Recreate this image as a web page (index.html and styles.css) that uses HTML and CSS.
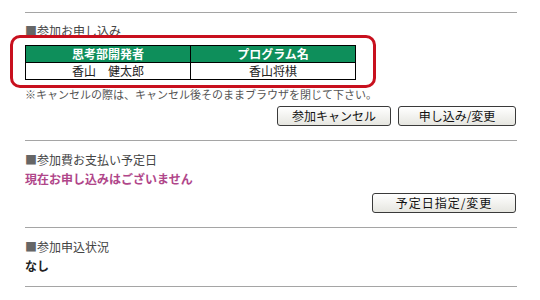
FILE: index.html
```html
<!DOCTYPE html>
<html lang="ja">
<head>
    <meta charset="UTF-8">
    <title>参加状況</title>
    <link rel="stylesheet" href="styles.css">
</head>
<body>
    <div class="page">
        <div class="rule"></div>

        <div class="section first">
            <div class="heading"><span class="mark">■</span>参加お申し込み</div>
            <div class="entry-wrap">
                <table class="entry-table">
                    <thead>
                        <tr>
                            <th class="col-dev">思考部開発者</th>
                            <th>プログラム名</th>
                        </tr>
                    </thead>
                    <tbody>
                        <tr>
                            <td>香山　健太郎</td>
                            <td>香山将棋</td>
                        </tr>
                    </tbody>
                </table>
                <div class="highlight"></div>
            </div>
            <div class="note">※キャンセルの際は、キャンセル後そのままブラウザを閉じて下さい。</div>
            <div class="actions">
                <button class="btn btn-cancel">参加キャンセル</button>
                <button class="btn btn-apply">申し込み/変更</button>
            </div>
        </div>

        <div class="rule"></div>

        <div class="section">
            <div class="heading"><span class="mark">■</span>参加費お支払い予定日</div>
            <div class="status-pink">現在お申し込みはございません</div>
            <div class="actions">
                <button class="btn btn-date">予定日指定/変更</button>
            </div>
        </div>

        <div class="rule"></div>

        <div class="section last">
            <div class="heading"><span class="mark">■</span>参加申込状況</div>
            <div class="status">なし</div>
        </div>

        <div class="rule"></div>

        <div class="section next">
            <div class="heading faint">■過去の大会参加履歴</div>
        </div>
    </div>
</body>
</html>
```

FILE: styles.css
```css
body {
    margin: 0;
    padding: 0;
    background-color: #fff;
    font-family: "Noto Sans CJK JP", "DejaVu Sans", sans-serif;
    font-size: 12px;
    color: #333;
}
.page {
    width: 492px;
    margin-left: 25px;
    padding-top: 12px;
}
.rule {
    border-top: 1px solid #a5a5a5;
}
.section {
    padding: 9px 0 14px;
}
.section.first {
    padding-top: 8px;
}
.section.last {
    padding-bottom: 11px;
}
.section.next {
    padding-top: 10px;
}
.heading {
    line-height: 19px;
    color: #444;
}
.heading.faint {
    color: #e4e4e4;
}
.mark {
    color: #666;
}
.entry-wrap {
    position: relative;
    width: 331px;
    margin-top: 5px;
}
.entry-table {
    width: 331px;
    border-collapse: collapse;
}
.entry-table th,
.entry-table td {
    border: 1px solid #000;
    height: 16px;
    padding: 0;
    line-height: 16px;
    text-align: center;
    font-size: 12px;
}
.entry-table th {
    background-color: #0e8f5b;
    color: #fff;
    font-weight: bold;
}
.entry-table .col-dev {
    width: 164px;
}
.entry-table td {
    color: #222;
}
.highlight {
    position: absolute;
    top: -10px;
    left: -15px;
    right: -20px;
    bottom: -8px;
    border: 3px solid #c8101e;
    border-radius: 10px;
    pointer-events: none;
}
.note {
    margin-top: 5px;
    line-height: 19px;
    font-size: 11px;
    color: #555;
}
.actions {
    display: flex;
    justify-content: flex-end;
    gap: 7px;
    margin-top: 2px;
    padding-right: 1px;
}
.btn {
    height: 20px;
    padding: 0;
    border: 1px solid #3a3a3a;
    border-radius: 3px;
    background: linear-gradient(#ffffff, #e6e6e0);
    font-family: "Noto Sans CJK JP", "DejaVu Sans", sans-serif;
    font-size: 12px;
    line-height: 18px;
    color: #111;
}
.btn-cancel {
    width: 114px;
}
.btn-apply {
    width: 118px;
}
.btn-date {
    width: 144px;
    letter-spacing: 1px;
}
.status-pink {
    line-height: 19px;
    font-weight: bold;
    color: #b0468a;
}
.section .status-pink + .actions {
    margin-top: 5px;
}
.status {
    line-height: 19px;
    font-weight: bold;
    color: #222;
}
```
